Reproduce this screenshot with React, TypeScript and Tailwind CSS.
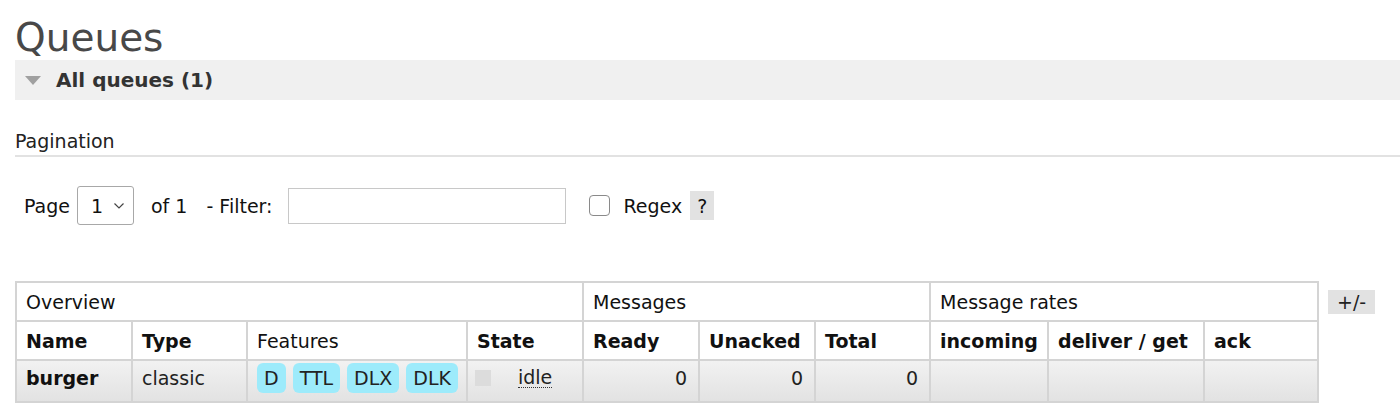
import React from 'react';

const features = ['D', 'TTL', 'DLX', 'DLK'];

const Th: React.FC<{ children?: React.ReactNode; bold?: boolean; colSpan?: number }> = ({ children, bold, colSpan }) => (
  <th
    colSpan={colSpan}
    className={`border-2 border-[#d4d4d4] bg-white px-[9px] text-left align-middle text-[#111] ${bold ? 'font-bold' : 'font-normal'}`}
  >
    {children}
  </th>
);

const Td: React.FC<{ children?: React.ReactNode; right?: boolean; className?: string }> = ({ children, right, className }) => (
  <td
    className={`border-2 border-[#d4d4d4] pb-[7px] align-middle ${right ? 'text-right pl-[9px] pr-[11px]' : 'text-left px-[9px]'} ${className ?? ''}`}
  >
    {children}
  </td>
);

export default function App() {
  return (
    <div className="min-h-screen bg-white pl-[15px] font-['DejaVu_Sans','Verdana',sans-serif] text-[19px] leading-[22px] text-[#222]">
      {/* Title */}
      <h1 className="pt-[18px] text-[39px] leading-[40px] font-normal text-[#484848]">Queues</h1>

      {/* Section header */}
      <div className="mt-[2px] flex h-[40px] items-center bg-[#f0f0f0]">
        <svg width="16" height="9" viewBox="0 0 16 9" className="ml-[10px] mt-[1px]">
          <polygon points="0,0 16,0 8,9" fill="#a0a0a0" />
        </svg>
        <span className="ml-[15px] text-[20px] leading-[24px] font-bold text-[#333]">All queues (1)</span>
      </div>

      {/* Pagination */}
      <div className="mt-[30px] border-b-2 border-[#e2e2e2] pb-[3px] text-[#222]">Pagination</div>

      <div className="mt-[29px] flex h-[39px] items-center pl-[9px] text-[#111]">
        <span>Page</span>
        <div className="ml-[7px] flex h-[39px] w-[57px] items-center rounded-[3px] border border-[#a8a8a8] bg-white pl-[13px]">
          <span>1</span>
          <svg width="10" height="6" viewBox="0 0 10 6" className="ml-[11px]">
            <polyline points="0.5,0.5 5,5 9.5,0.5" fill="none" stroke="#444" strokeWidth="1.2" />
          </svg>
        </div>
        <span className="ml-[17px]">of 1</span>
        <span className="ml-[19px]">- Filter:</span>
        <input
          type="text"
          className="ml-[16px] h-[36px] w-[278px] border border-[#c8c8c8] bg-white outline-none"
        />
        <input
          type="checkbox"
          className="ml-[23px] h-[21px] w-[21px] appearance-none rounded-[4px] border border-[#8a8a8a] bg-white"
        />
        <span className="ml-[13px]">Regex</span>
        <span className="ml-[8px] flex h-[29px] w-[24px] items-center justify-center bg-[#e2e2e2]">?</span>
      </div>

      {/* Queue table */}
      <div className="mt-[56px] flex items-start">
        <table className="w-[1302px] table-fixed border-collapse border-2 border-[#d4d4d4]">
          <colgroup>
            <col className="w-[116px]" />
            <col className="w-[115px]" />
            <col className="w-[220px]" />
            <col className="w-[116px]" />
            <col className="w-[116px]" />
            <col className="w-[116px]" />
            <col className="w-[115px]" />
            <col className="w-[118px]" />
            <col className="w-[156px]" />
            <col className="w-[114px]" />
          </colgroup>
          <thead>
            <tr className="h-[39px]">
              <Th colSpan={4}>Overview</Th>
              <Th colSpan={3}>Messages</Th>
              <Th colSpan={3}>Message rates</Th>
            </tr>
            <tr className="h-[39px]">
              <Th bold>Name</Th>
              <Th bold>Type</Th>
              <Th>Features</Th>
              <Th bold>State</Th>
              <Th bold>Ready</Th>
              <Th bold>Unacked</Th>
              <Th bold>Total</Th>
              <Th bold>incoming</Th>
              <Th bold>deliver / get</Th>
              <Th bold>ack</Th>
            </tr>
          </thead>
          <tbody>
            <tr className="h-[42px] bg-gradient-to-b from-[#f2f2f2] to-[#e2e2e2]">
              <Td className="font-bold text-[#111]">burger</Td>
              <Td>classic</Td>
              <Td>
                <div className="flex gap-[7px]">
                  {features.map(f => (
                    <span
                      key={f}
                      className="flex h-[30px] items-center rounded-[6px] bg-[#9debfb] px-[7px] text-[#222]"
                    >
                      {f}
                    </span>
                  ))}
                </div>
              </Td>
              <Td>
                <div className="-ml-[2px] flex items-center">
                  <span className="h-[16px] w-[16px] bg-[#dcdcdc]" />
                  <span className="ml-[27px] border-b border-dotted border-[#333] leading-[20px]">idle</span>
                </div>
              </Td>
              <Td right>0</Td>
              <Td right>0</Td>
              <Td right>0</Td>
              <Td />
              <Td />
              <Td />
            </tr>
          </tbody>
        </table>
        <span className="ml-[9px] mt-[9px] flex h-[24px] w-[47px] items-center justify-center bg-[#e2e2e2] text-[#222]">
          +/-
        </span>
      </div>
    </div>
  );
}
